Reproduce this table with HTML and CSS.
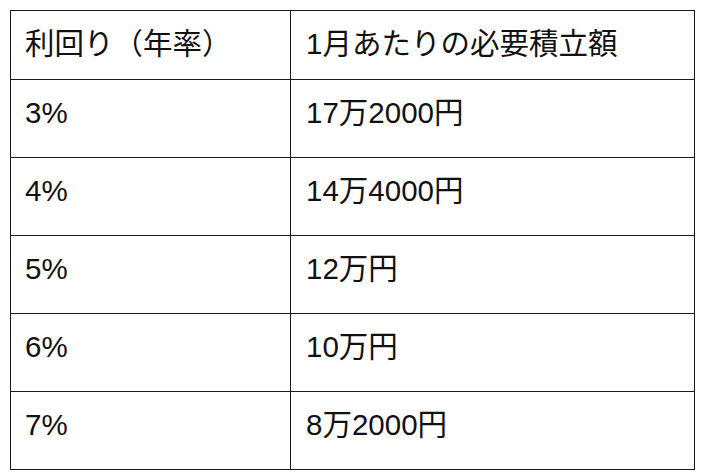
FILE: index.html
```html
<!DOCTYPE html>
<html lang="ja">
<head>
<meta charset="utf-8">
<link rel="stylesheet" href="styles.css">
</head>
<body>
<div class="wrap">
<table class="rates">
  <tr class="head"><td class="c1">利回り（年率）</td><td class="c2">1月あたりの必要積立額</td></tr>
  <tr><td class="c1">3%</td><td class="c2">17万2000円</td></tr>
  <tr><td class="c1">4%</td><td class="c2">14万4000円</td></tr>
  <tr><td class="c1">5%</td><td class="c2">12万円</td></tr>
  <tr><td class="c1">6%</td><td class="c2">10万円</td></tr>
  <tr><td class="c1">7%</td><td class="c2">8万2000円</td></tr>
</table>
</div>
</body>
</html>
```
FILE: styles.css
```css
html, body {
  margin: 0;
  padding: 0;
  background: #fff;
}
.wrap {
  padding: 10px;
}
.rates {
  border-collapse: collapse;
  width: 685px;
  table-layout: fixed;
  font-family: "Liberation Sans", Arial, "Noto Sans CJK JP", sans-serif;
  font-size: 29.5px;
  line-height: 34px;
  color: #111;
}
.rates td {
  border: 1px solid #1a1a1a;
  vertical-align: top;
  padding: 16px 14px 0 14px;
  box-sizing: border-box;
  height: 78px;
  white-space: nowrap;
}
.rates tr.head td {
  height: 69px;
  padding-top: 16px;
}
.rates .c1 {
  width: 280px;
}
.rates .c2 {
  padding-left: 15px;
}
```
